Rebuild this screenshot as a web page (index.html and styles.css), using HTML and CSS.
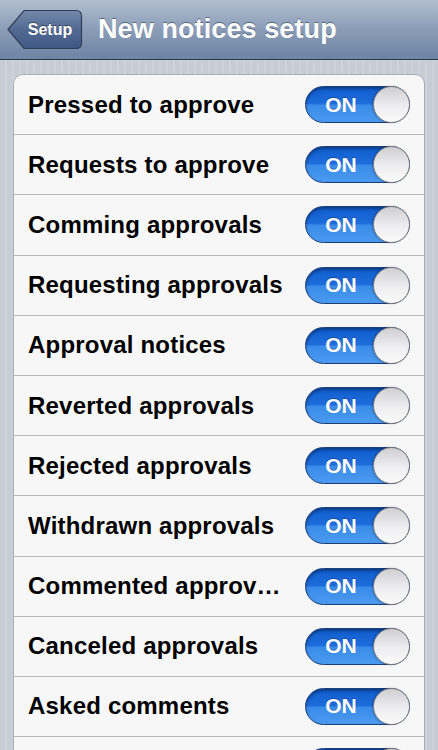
FILE: index.html
```html
<!DOCTYPE html>
<html lang="en">
<head>
  <meta charset="UTF-8" />
  <meta name="viewport" content="width=device-width, initial-scale=1.0" />
  <title>New notices setup</title>
  <link rel="stylesheet" href="styles.css">
</head>
<body>
  <div class="navbar">
    <a class="back" href="#">
      <svg class="back-shape" width="76" height="41" viewBox="0 0 76 41">
        <defs>
          <linearGradient id="backFill" x1="0" y1="0" x2="0" y2="1">
            <stop offset="0" stop-color="#7489ab" />
            <stop offset="0.5" stop-color="#526a93" />
            <stop offset="1" stop-color="#3f5784" />
          </linearGradient>
        </defs>
        <path d="M1 20.5 L17 1.5 H69 Q74.5 1.5 74.5 7 V34 Q74.5 39.5 69 39.5 H17 Z" fill="url(#backFill)" stroke="#2f3d57" stroke-width="1.2" />
      </svg>
      <span>Setup</span>
    </a>
    <h1>New notices setup</h1>
  </div>

  <div class="content">
    <div class="group">
      <div class="row"><span class="label">Pressed to approve</span><span class="toggle"><b>ON</b><i></i></span></div>
      <div class="row"><span class="label">Requests to approve</span><span class="toggle"><b>ON</b><i></i></span></div>
      <div class="row"><span class="label">Comming approvals</span><span class="toggle"><b>ON</b><i></i></span></div>
      <div class="row"><span class="label">Requesting approvals</span><span class="toggle"><b>ON</b><i></i></span></div>
      <div class="row"><span class="label">Approval notices</span><span class="toggle"><b>ON</b><i></i></span></div>
      <div class="row"><span class="label">Reverted approvals</span><span class="toggle"><b>ON</b><i></i></span></div>
      <div class="row"><span class="label">Rejected approvals</span><span class="toggle"><b>ON</b><i></i></span></div>
      <div class="row"><span class="label">Withdrawn approvals</span><span class="toggle"><b>ON</b><i></i></span></div>
      <div class="row"><span class="label">Commented approvals</span><span class="toggle"><b>ON</b><i></i></span></div>
      <div class="row"><span class="label">Canceled approvals</span><span class="toggle"><b>ON</b><i></i></span></div>
      <div class="row"><span class="label">Asked comments</span><span class="toggle"><b>ON</b><i></i></span></div>
      <div class="row"><span class="label"></span><span class="toggle"><i></i></span></div>
    </div>
  </div>
</body>
</html>
```

FILE: styles.css
```css
* {
  box-sizing: border-box;
}

html, body {
  height: 100%;
}

body {
  margin: 0;
  overflow: hidden;
  font-family: "Liberation Sans", Arial, sans-serif;
  background: repeating-linear-gradient(90deg, #c6cdd5 0 5px, #ccd3da 5px 7px);
}

.navbar {
  height: 60px;
  display: flex;
  align-items: center;
  gap: 15px;
  padding: 0 0 0 7px;
  background: linear-gradient(#b3bfd0, #8a9cb7 50%, #6d84a3);
  border-bottom: 1px solid #2e3a4c;
}

.back {
  position: relative;
  width: 76px;
  height: 41px;
  display: flex;
  align-items: center;
  justify-content: center;
  padding-left: 10px;
  color: #fff;
  text-decoration: none;
  font-weight: bold;
  font-size: 16px;
  text-shadow: 0 -1px 0 rgba(0, 0, 0, 0.45);
}

.back-shape {
  position: absolute;
  left: 0;
  top: 0;
}

.back span {
  position: relative;
}

.navbar h1 {
  margin: 0;
  color: #fff;
  font-size: 27px;
  font-weight: bold;
  letter-spacing: 0.1px;
  text-shadow: 0 -1px 0 rgba(40, 55, 80, 0.6);
}

.content {
  padding: 14px 13px 0 13px;
}

.group {
  background: #f7f7f7;
  border: 1px solid #a9adb3;
  border-radius: 10px;
  overflow: hidden;
}

.row {
  height: 60.2px;
  display: flex;
  align-items: center;
  justify-content: space-between;
  padding: 0 14px 0 14px;
  border-top: 1px solid #b7b9bc;
}

.row:first-child {
  border-top: none;
  height: 59.2px;
}

.label {
  font-size: 24px;
  font-weight: bold;
  letter-spacing: 0.2px;
  color: #000;
  white-space: nowrap;
  overflow: hidden;
  text-overflow: ellipsis;
  margin-right: 20px;
}

.toggle {
  flex: none;
  position: relative;
  width: 105px;
  height: 37px;
  border-radius: 19px;
  border: 1px solid #1c3f7a;
  background: linear-gradient(#0f5ccd, #1f6ddc 48%, #3a8ce9 52%, #4b9af0);
  box-shadow: inset 0 2px 3px rgba(0, 0, 0, 0.35);
  display: flex;
  align-items: center;
}

.toggle b {
  width: 70px;
  text-align: center;
  color: #fff;
  font-size: 21px;
  font-weight: bold;
  text-shadow: 0 -1px 0 rgba(0, 0, 0, 0.3);
}

.toggle i {
  position: absolute;
  right: -1px;
  top: -1px;
  width: 37px;
  height: 37px;
  border-radius: 50%;
  border: 1px solid #7b7e84;
  background: linear-gradient(#cfcfd1, #eeeef0 55%, #fafafa);
  box-shadow: -1px 0 2px rgba(0, 0, 0, 0.25);
}
```
